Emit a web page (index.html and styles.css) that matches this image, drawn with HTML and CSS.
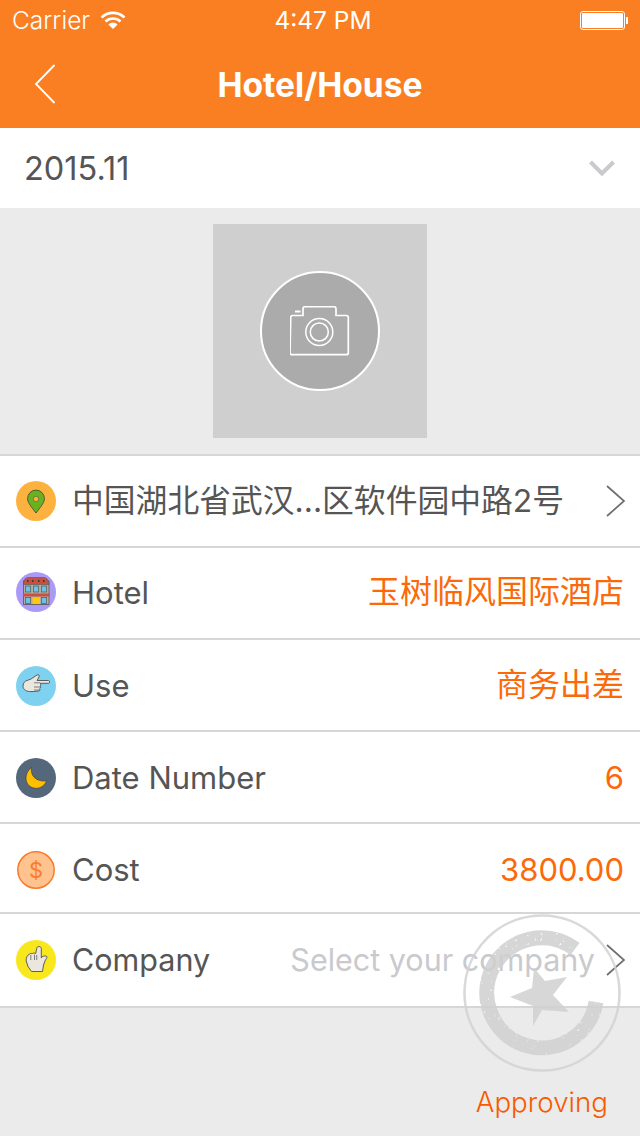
FILE: index.html
```html
<!DOCTYPE html>
<html lang="en">
<head>
  <meta charset="UTF-8" />
  <title>Hotel/House</title>
  <link rel="stylesheet" href="styles.css">
</head>
<body>
  <header class="top">
    <div class="status">
      <div class="status-left">
        <span>Carrier</span>
        <svg class="wifi" width="26" height="20" viewBox="0 0 26 20">
          <path d="M1.5 7.5a16.5 16.5 0 0 1 23 0" fill="none" stroke="#fff" stroke-width="2.6"/>
          <path d="M5.5 11.5a11 11 0 0 1 15 0" fill="none" stroke="#fff" stroke-width="2.6"/>
          <path d="M8.4 14.4 13 19l4.6-4.6a6.6 6.6 0 0 0-9.2 0z" fill="#fff"/>
        </svg>
      </div>
      <span class="clock">4:47 PM</span>
      <div class="battery"><i></i></div>
    </div>
    <div class="nav">
      <svg class="back" width="22" height="40" viewBox="0 0 22 40">
        <path d="M20.500 1 2 20l18.500 19" fill="none" stroke="#fff" stroke-width="1.8"/>
      </svg>
      <h1>Hotel/House</h1>
    </div>
  </header>

  <div class="month">
    <span>2015.11</span>
    <svg width="26" height="16" viewBox="0 0 26 16">
      <path d="M1.500 2 13 13.500 24.500 2" fill="none" stroke="#c9c9ce" stroke-width="4"/>
    </svg>
  </div>

  <section class="photo-area">
    <div class="photo">
      <div class="photo-circle">
        <svg width="60" height="50" viewBox="0 0 60 50">
          <path d="M.7 11.500q0-2 2-2h10.300v-6.800q0-2 2-2h29q2 0 2 2v6.800h10.300q2 0 2 2v35.200q0 2-2 2h-54.300q-2 0-2-2z" fill="none" stroke="#fff" stroke-width="1.700"/>
          <circle cx="29.300" cy="26" r="13.500" fill="none" stroke="#fff" stroke-width="1.500"/>
          <circle cx="29.300" cy="26" r="9" fill="none" stroke="#fff" stroke-width="1.500"/>
          <path d="M5 5.500h5.500" stroke="#fff" stroke-width="2"/>
        </svg>
      </div>
    </div>
  </section>

  <ul class="form">
    <li class="row">
      <svg class="icon" viewBox="0 0 40 40">
        <circle cx="20" cy="20" r="20" fill="#fdb240"/>
        <path d="M20 32c-5-6.500-8.400-10.500-8.400-14.500a8.400 8.400 0 0 1 16.800 0c0 4-3.400 8-8.400 14.500z" fill="#6ab120" stroke="#4c5a3a" stroke-width="1"/>
        <circle cx="20" cy="18" r="2.700" fill="#fdb240" stroke="#4c5a3a" stroke-width=".6"/>
      </svg>
      <span class="label label-cjk">中国湖北省武汉...区软件园中路2号</span>
      <svg class="arrow" width="20" height="32" viewBox="0 0 20 32">
        <path d="M1 1l17 15L1 31" fill="none" stroke="#6e6e6e" stroke-width="1.700"/>
      </svg>
    </li>
    <li class="row row-up">
      <svg class="icon" viewBox="0 0 40 40">
        <circle cx="20" cy="20" r="20" fill="#ab99f7"/>
        <rect x="7.500" y="9" width="25.500" height="23.500" fill="#b5aea4" stroke="#555" stroke-width=".8"/>
        <path d="M7.500 12.500q0-7 5-7h15q5 0 5.500 7z" fill="#c8503f" stroke="#555" stroke-width=".6"/>
        <path d="M7 21.500h26.500v3H7z" fill="#c8503f"/>
        <path d="M11 9h1.500M16 9h1.500M22 9h1.500M27 9h1.500" stroke="#2f3a45" stroke-width="1.800"/>
        <rect x="9.500" y="14" width="5.200" height="6" fill="#6cc1e4" stroke="#555" stroke-width=".7"/>
        <rect x="17.500" y="14" width="5.200" height="6" fill="#6cc1e4" stroke="#555" stroke-width=".7"/>
        <rect x="25.500" y="14" width="5.200" height="6" fill="#6cc1e4" stroke="#555" stroke-width=".7"/>
        <rect x="9.500" y="25.500" width="5.200" height="6" fill="#6cc1e4" stroke="#555" stroke-width=".7"/>
        <rect x="16.500" y="25.500" width="7.500" height="6.500" fill="#fdc90c"/>
        <rect x="25.500" y="25.500" width="5.200" height="6" fill="#6cc1e4" stroke="#555" stroke-width=".7"/>
      </svg>
      <span class="label">Hotel</span>
      <span class="value value-cjk">玉树临风国际酒店</span>
    </li>
    <li class="row">
      <svg class="icon icon-low" viewBox="0 0 40 40">
        <circle cx="20" cy="20" r="20" fill="#7fd2ef"/>
        <path d="M7 20c0-3 2-5 4-5.500l4-1.500c2-1 4-3 6-4 1.500-.8 3 .5 2 2l-2 3.500h11.500c1.500 0 1.500 2.800 0 2.800H24c1 .5 1.200 2.200 0 2.700.8.600.8 2-.3 2.600.6.800.3 2-.9 2.400-2 .4-5 .5-7.800.6-4 .2-8-1.600-8-5.600z" fill="#ebe7df" stroke="#4f4f4f" stroke-width=".9"/>
        <path d="M18 16.800h6M18 21h6M18 24h5.500" fill="none" stroke="#4f4f4f" stroke-width=".7"/>
      </svg>
      <span class="label">Use</span>
      <span class="value value-cjk">商务出差</span>
    </li>
    <li class="row">
      <svg class="icon icon-low" viewBox="0 0 40 40">
        <circle cx="20" cy="20" r="20" fill="#54677b"/>
        <path d="M15.500 9.500c-1.500 7.500 4 14.500 15 13.500-1.800 4.500-5.800 7.300-10.300 7.300-5.800 0-10.200-4.300-10.200-10 0-4.300 2-8.300 5.500-10.800z" fill="#fdbf00" stroke="#3a3a3a" stroke-width=".6"/>
      </svg>
      <span class="label">Date Number</span>
      <span class="value">6</span>
    </li>
    <li class="row row-down">
      <svg class="icon icon-low" viewBox="0 0 40 40">
        <circle cx="20" cy="20" r="18.200" fill="#fec38f" stroke="#fb7c2a" stroke-width="1.500"/>
        <text class="dollar" x="20" y="27.500" text-anchor="middle">$</text>
      </svg>
      <span class="label">Cost</span>
      <span class="value">3800.00</span>
    </li>
    <li class="row row-tall">
      <svg class="icon" viewBox="0 0 40 40">
        <circle cx="20" cy="20" r="20" fill="#f8e71c"/>
        <path d="M20.700 8.500c0-2.600 4.600-2.600 4.600 0v9.500l1-1.500c1.500-.6 4.500-1 4.700.4.200 1.100-1.500 2.600-2 4.100l-1.500 4-1 6.500h-11l-3.500-5-1.800-5.500c-.3-3 1-6 3-6.500.4-1.200 2-1.500 2.800-.5.700-1 2.200-1.300 3.700-.5z" fill="#ebe7df" stroke="#4f4f4f" stroke-width=".9"/>
        <path d="M14.800 15v5M18.500 14.500v5.500M20.700 15v5" fill="none" stroke="#4f4f4f" stroke-width=".7"/>
      </svg>
      <span class="label">Company</span>
      <span class="value value-empty">Select your company</span>
      <svg class="arrow" width="20" height="32" viewBox="0 0 20 32">
        <path d="M1 1l17 15L1 31" fill="none" stroke="#6e6e6e" stroke-width="1.700"/>
      </svg>
    </li>
  </ul>

  <div class="status-foot">Approving</div>

  <svg class="stamp" width="160" height="160" viewBox="0 0 160 160">
    <defs>
      <filter id="rough" filterUnits="userSpaceOnUse" x="0" y="0" width="160" height="160">
        <feTurbulence type="fractalNoise" baseFrequency=".28" numOctaves="2" seed="4" result="n"/>
        <feColorMatrix in="n" type="matrix" values="0 0 0 0 0 0 0 0 0 0 0 0 0 0 0 0 0 0 -9 7.200" result="m"/>
        <feComposite in="SourceGraphic" in2="m" operator="in"/>
      </filter>
    </defs>
    <circle cx="80" cy="79" r="77.500" fill="none" stroke="#d2d2d2" stroke-width="2.600" opacity=".85"/>
    <path d="M134 88A55 55 0 1 1 113 35" fill="none" stroke="#d0d0d0" stroke-width="15" filter="url(#rough)" opacity=".85"/>
    <polygon points="72,54 83,67 105,63 91,81 107,98 80,96 71,112 71,92 48,83 70,74" fill="#d0d0d0" opacity=".85"/>
  </svg>
</body>
</html>
```
FILE: styles.css
```css
html, body {
  margin: 0;
  height: 1136px;
  overflow: hidden;
  background: #ebebeb;
  font-family: "Inter", "Noto Sans CJK SC", sans-serif;
  color: #555;
}
body {
  position: relative;
}
.top {
  height: 128px;
  background: #f97f22;
  color: #fff;
}
.status {
  height: 40px;
  display: flex;
  align-items: center;
  justify-content: space-between;
  padding: 0 15px 0 12px;
  font-size: 24.500px;
  position: relative;
}
.status-left {
  display: flex;
  align-items: center;
  gap: 10px;
  font-weight: 300;
}
.clock {
  position: absolute;
  left: 6px;
  right: 0;
  text-align: center;
}
.battery {
  width: 41px;
  height: 15px;
  border: 1px solid #fff;
  border-radius: 3px;
  padding: 1px;
  position: relative;
}
.battery i {
  display: block;
  height: 100%;
  background: #fff;
  border-radius: 1px;
}
.battery::after {
  content: '';
  position: absolute;
  right: -4px;
  top: 5px;
  width: 2px;
  height: 7px;
  background: #fff;
}
.nav {
  height: 88px;
  display: flex;
  align-items: center;
  justify-content: center;
  position: relative;
}
.nav h1 {
  margin: 0;
  font-size: 33.600px;
  font-weight: 700;
}
.back {
  position: absolute;
  left: 34px;
  top: 24px;
}
.month {
  height: 80px;
  background: #fff;
  display: flex;
  align-items: center;
  justify-content: space-between;
  padding: 0 25px 0 24px;
  font-size: 32.500px;
}
.photo-area {
  height: 246px;
  padding-top: 16px;
  box-sizing: border-box;
}
.photo {
  width: 214px;
  height: 214px;
  margin: 0 auto;
  background: #cfcfcf;
  display: flex;
  align-items: center;
  justify-content: center;
}
.photo-circle {
  width: 116px;
  height: 116px;
  border: 2px solid #fff;
  border-radius: 50%;
  background: #ababab;
  display: flex;
  align-items: center;
  justify-content: center;
}
.form {
  list-style: none;
  margin: 0;
  padding: 0;
  border-top: 2px solid #d6d6d6;
  background: #fff;
}
.row {
  height: 90px;
  border-bottom: 2px solid #d6d6d6;
  display: flex;
  align-items: center;
  padding: 0 16px;
  font-size: 31px;
  line-height: 1;
}
.row-up {
  height: 88px;
  padding-bottom: 2px;
}
.row-down {
  height: 86px;
  padding-top: 2px;
}
.row-tall {
  height: 92px;
  font-size: 30.500px;
}
.icon {
  width: 40px;
  height: 40px;
  flex: none;
  margin-right: 16px;
}
.icon-low {
  margin-top: 2px;
}
.label {
  flex: 1;
  white-space: nowrap;
}
.label-cjk {
  font-size: 31.800px;
}
.value {
  color: #fb6a0a;
  white-space: nowrap;
}
.value-cjk {
  font-size: 32px;
}
.value-empty {
  color: #c9c9ce;
}
.arrow {
  margin-left: 11px;
  margin-right: -2px;
  flex: none;
}
.dollar {
  font-size: 22px;
  fill: #fb7c2a;
}
.status-foot {
  position: absolute;
  right: 32px;
  top: 1085px;
  font-size: 27.700px;
  font-weight: 300;
  color: #f95a00;
}
.stamp {
  position: absolute;
  left: 462px;
  top: 914px;
}
```
